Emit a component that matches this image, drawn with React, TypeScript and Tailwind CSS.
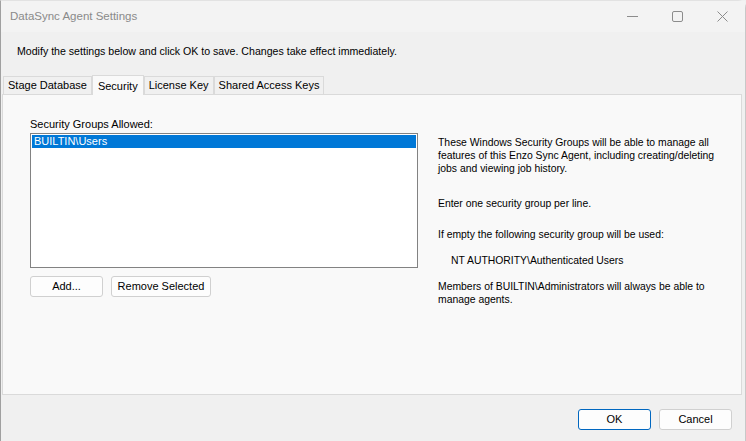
const font = { fontFamily: '"Liberation Sans", Arial, sans-serif' };

const Tab = ({ label, active }: { label: string; active?: boolean }) => (
  <div
    className={
      active
        ? 'h-[20px] -mb-px px-[5px] flex items-start pt-[2px] bg-[#f9f9f9] border border-b-0 border-[#dadada] text-[11px] text-black z-10 relative'
        : 'h-[18px] px-[4px] flex items-center bg-[#f0f0f0] border border-b-0 border-[#dadada] text-[11px] text-black'
    }
  >
    {label}
  </div>
);

const PlainButton = ({ label, w }: { label: string; w: string }) => (
  <button
    className={`${w} h-[21px] rounded-[3px] border border-[#d0d0d0] bg-[#fdfdfd] text-[11px] text-black flex items-center justify-center`}
  >
    {label}
  </button>
);

export default function App() {
  return (
    <div className="w-[746px] h-[441px] bg-[#f0f0f0] overflow-hidden" style={font}>
      <div className="w-full h-full flex flex-col border-l border-[#a0a0a0] rounded-tr-[8px] border-t border-r border-t-[#e2e2e2] border-r-[#c8c8c8]">
        {/* title bar */}
        <div className="h-[31px] bg-[#f3f3f3] flex items-center pl-[9px] shrink-0">
          <span className="text-[11.5px] text-[#8a8a8a]">DataSync Agent Settings</span>
          <div className="ml-auto flex items-center h-full">
            <div className="w-[45px] h-full flex items-center justify-center">
              <svg width="11" height="11" viewBox="0 0 11 11">
                <line x1="0" y1="5.5" x2="11" y2="5.5" stroke="#8c8c8c" strokeWidth="1" />
              </svg>
            </div>
            <div className="w-[45px] h-full flex items-center justify-center">
              <svg width="11" height="11" viewBox="0 0 11 11">
                <rect x="0.5" y="0.5" width="10" height="10" rx="1.5" fill="none" stroke="#8c8c8c" strokeWidth="1" />
              </svg>
            </div>
            <div className="w-[45px] h-full flex items-center justify-center">
              <svg width="11" height="11" viewBox="0 0 11 11">
                <path d="M0.5 0.5 L10.5 10.5 M10.5 0.5 L0.5 10.5" stroke="#8c8c8c" strokeWidth="1" />
              </svg>
            </div>
          </div>
        </div>

        {/* header message */}
        <div className="h-[42px] flex items-center pb-[3px] pl-[16px] text-[10.6px] text-black shrink-0">
          Modify the settings below and click OK to save. Changes take effect immediately.
        </div>

        {/* tabs */}
        <div className="pl-[2px] flex items-end h-[20px] shrink-0">
          <Tab label="Stage Database" />
          <Tab label="Security" active />
          <Tab label="License Key" />
          <Tab label="Shared Access Keys" />
        </div>

        {/* tab panel */}
        <div className="ml-[1px] mr-[3px] h-[301px] bg-[#f9f9f9] border border-[#dadada] flex pt-[21px] shrink-0">
          <div className="pl-[27px] w-[414px] shrink-0">
            <div className="text-[11px] text-black leading-[16px]">Security Groups Allowed:</div>
            <div className="mt-[1px] w-[388px] h-[135px] bg-white border border-[#828282] p-[1px]">
              <div className="h-[13px] bg-[#0078d7] text-white text-[11px] leading-[13px] pl-[2px]">
                BUILTIN\Users
              </div>
            </div>
            <div className="mt-[8px] flex gap-[8px]">
              <PlainButton label="Add..." w="w-[73px]" />
              <PlainButton label="Remove Selected" w="w-[100px]" />
            </div>
          </div>
          <div className="pl-[21px] pt-[20px] w-[306px] text-[10.4px] leading-[13px] text-black">
            <p>These Windows Security Groups will be able to manage all features of this Enzo Sync Agent, including creating/deleting jobs and viewing job history.</p>
            <p className="mt-[22px]">Enter one security group per line.</p>
            <p className="mt-[18px]">If empty the following security group will be used:</p>
            <p className="mt-[13px] pl-[13px]">NT AUTHORITY\Authenticated Users</p>
            <p className="mt-[13px]">Members of BUILTIN\Administrators will always be able to manage agents.</p>
          </div>
        </div>

        {/* footer */}
        <div className="flex justify-end gap-[8px] pr-[13px] pt-[14px]">
          <button className="w-[73px] h-[21px] rounded-[3px] border border-[#0067c0] bg-[#fdfdfd] text-[11px] text-black">
            OK
          </button>
          <button className="w-[73px] h-[21px] rounded-[3px] border border-[#d0d0d0] bg-[#fdfdfd] text-[11px] text-black">
            Cancel
          </button>
        </div>
      </div>
    </div>
  );
}
